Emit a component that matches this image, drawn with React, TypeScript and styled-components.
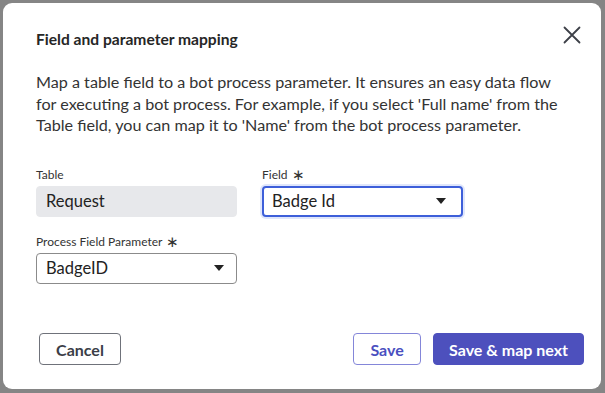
import styled, { createGlobalStyle } from "styled-components";

const Global = createGlobalStyle`
  html, body {
    margin: 0;
    padding: 0;
    background: #858585;
    width: 605px;
    height: 393px;
    overflow: hidden;
  }
  * { box-sizing: border-box; }
`;

const Backdrop = styled.div`
  width: 605px;
  height: 393px;
  padding: 3px 4px 4px 3px;
  font-family: Lato, "Open Sans", sans-serif;
`;

const Dialog = styled.div`
  width: 598px;
  height: 386px;
  background: #fff;
  border-radius: 9px;
  display: flex;
  flex-direction: column;
  padding: 25px 17px 23px 33px;
`;

const Header = styled.div`
  display: flex;
  justify-content: space-between;
  align-items: flex-start;
`;

const Title = styled.h2`
  margin: 0;
  padding-top: 1px;
  font-size: 15.6px;
  font-weight: 700;
  color: #262626;
  line-height: 20px;
`;

const Close = styled.button`
  border: none;
  background: none;
  padding: 0;
  width: 22px;
  height: 22px;
  margin-top: -4px;
  margin-right: 1px;
  cursor: pointer;
  display: flex;
  align-items: center;
  justify-content: center;
`;

const Intro = styled.p`
  margin: 22px 0 0;
  font-size: 16.15px;
  line-height: 21.5px;
  color: #333;
  width: 526px;
`;

const Grid = styled.div`
  margin-top: 31px;
  display: grid;
  grid-template-columns: 201px 201px;
  column-gap: 25px;
  row-gap: 17px;
`;

const Group = styled.div`
  display: flex;
  flex-direction: column;
  gap: 4px;
`;

const Label = styled.label`
  font-size: 12px;
  line-height: 15px;
  color: #333;
  display: flex;
  align-items: center;
  gap: 4px;
`;

const Star = styled.span`
  font-size: 15px;
  line-height: 12px;
  color: #333;
`;

const Box = styled.div<{ $variant?: "readonly" | "focused" | "default" }>`
  height: 31px;
  border-radius: 4px;
  display: flex;
  align-items: center;
  justify-content: space-between;
  padding: ${(p) => (p.$variant === "focused" ? "0 15px 0 8px" : "0 12px 0 9px")};
  font-size: 16.5px;
  color: #222;
  background: ${(p) => (p.$variant === "readonly" ? "#e7e8eb" : "#fff")};
  border: ${(p) =>
    p.$variant === "readonly"
      ? "1px solid #e7e8eb"
      : p.$variant === "focused"
      ? "2px solid #3d5fd9"
      : "1px solid #8b8b8b"};
  box-shadow: ${(p) => (p.$variant === "focused" ? "0 0 0 2px #dfe6fb" : "none")};
`;

const Caret = styled.span`
  width: 0;
  height: 0;
  border-left: 5px solid transparent;
  border-right: 5px solid transparent;
  border-top: 6px solid #222;
`;

const Footer = styled.div`
  margin-top: auto;
  display: flex;
  align-items: center;
  padding-left: 3px;
  padding-bottom: 1px;
  gap: 12px;
`;

const Button = styled.button<{ $kind: "neutral" | "outline" | "primary" }>`
  height: 32px;
  border-radius: 4px;
  font-family: Lato, "Open Sans", sans-serif;
  font-weight: 700;
  font-size: 16px;
  padding: 0 15px;
  cursor: pointer;
  color: ${(p) => (p.$kind === "primary" ? "#fff" : p.$kind === "outline" ? "#4a4fbf" : "#3b3e47")};
  background: ${(p) => (p.$kind === "primary" ? "#4d50bd" : "#fff")};
  border: 1px solid
    ${(p) => (p.$kind === "primary" ? "#4d50bd" : p.$kind === "outline" ? "#8486d9" : "#6f727a")};
`;

const Spacer = styled.div`
  flex: 1;
`;

function App() {
  return (
    <>
      <Global />
      <Backdrop>
        <Dialog>
          <Header>
            <Title>Field and parameter mapping</Title>
            <Close aria-label="Close">
              <svg width="18" height="18" viewBox="0 0 18 18">
                <path d="M1.5 1.5 L16.5 16.5 M16.5 1.5 L1.5 16.5" stroke="#3d4048" strokeWidth="1.8" strokeLinecap="round" />
              </svg>
            </Close>
          </Header>
          <Intro>
            Map a table field to a bot process parameter. It ensures an easy data flow for executing a bot
            process. For example, if you select 'Full name' from the Table field, you can map it to 'Name'
            from the bot process parameter.
          </Intro>
          <Grid>
            <Group>
              <Label>Table</Label>
              <Box $variant="readonly">Request</Box>
            </Group>
            <Group>
              <Label>
                Field <Star>∗</Star>
              </Label>
              <Box $variant="focused">
                Badge Id
                <Caret />
              </Box>
            </Group>
            <Group>
              <Label>
                Process Field Parameter <Star>∗</Star>
              </Label>
              <Box $variant="default">
                BadgeID
                <Caret />
              </Box>
            </Group>
          </Grid>
          <Footer>
            <Button $kind="neutral" style={{ width: 82 }}>Cancel</Button>
            <Spacer />
            <Button $kind="outline" style={{ width: 68 }}>Save</Button>
            <Button $kind="primary">Save &amp; map next</Button>
          </Footer>
        </Dialog>
      </Backdrop>
    </>
  );
}

export default App;
